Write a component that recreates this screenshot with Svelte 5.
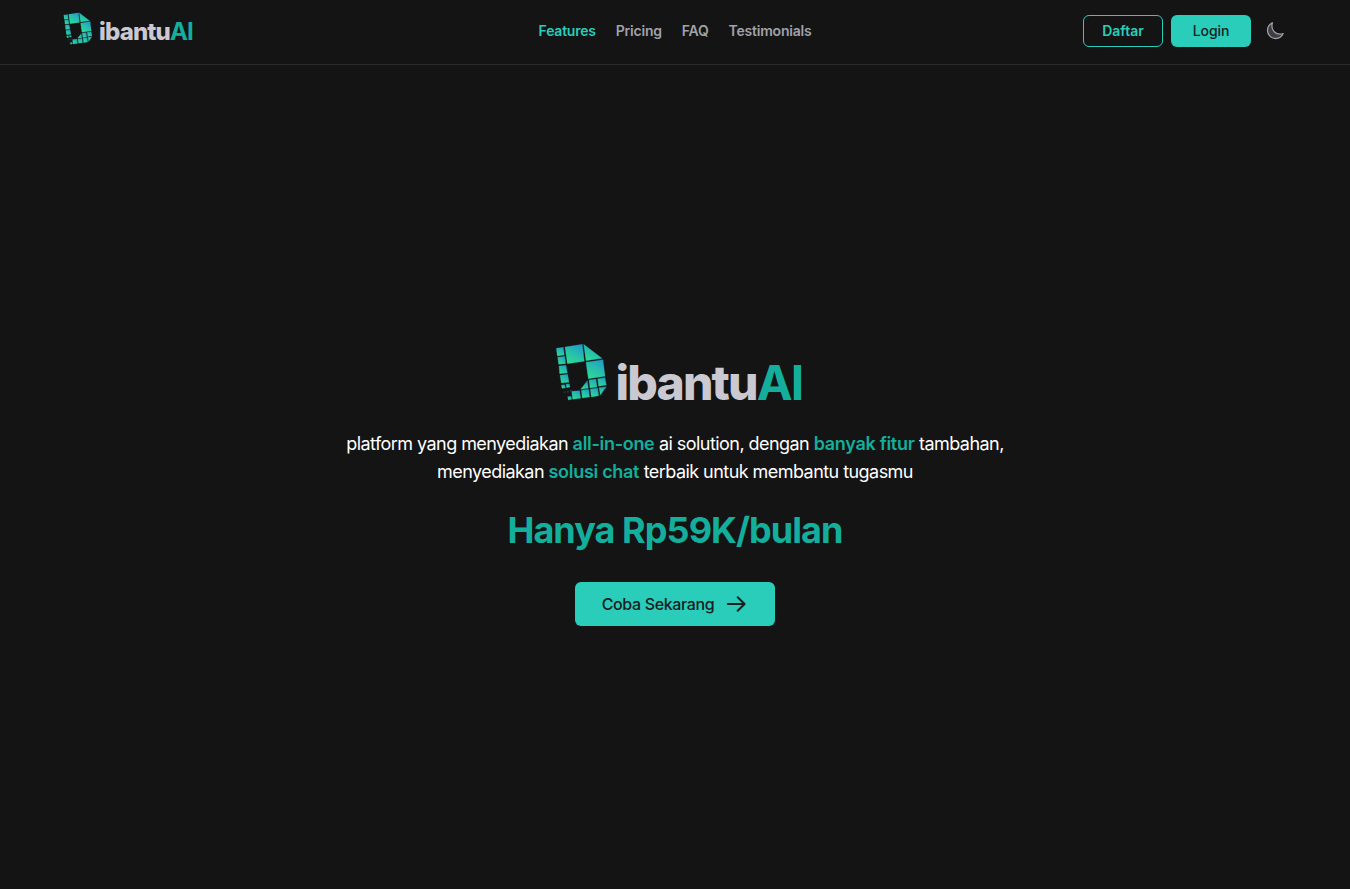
<script>
  const links = ['Features', 'Pricing', 'FAQ', 'Testimonials'];

  // Corner points of the tiles that make up the brand mark.
  const tiles = [
    '31,40 52,37 55,60 34,63',
    '57,36 109,28 115,79 64,86',
    '113,28 168,70 120,77',
    '35,67 56,64 59,86 38,88',
    '39,93 60,91 64,114 41,116',
    '42,121 65,118 69,142 46,144',
    '46,150 56,149 58,159 48,160',
    '60,148 70,147 72,156 62,158',
    '120,82 171,74 177,124 127,131',
    '124,137 127,160 104,163',
    '129,135 150,132 153,156 132,159',
    '155,131 177,128 181,150 158,154',
    '65,185 75,184 77,193 67,195',
    '77,169 101,167 104,190 80,193',
    '106,166 128,163 131,186 109,189',
    '133,162 155,159 158,182 136,186',
    '159,158 181,155 163,180'
  ];
</script>

{#snippet brand(id)}
  <span class="brand {id}">
    <svg class="mark" viewBox="27 24 159 174" aria-hidden="true">
      <defs>
        <linearGradient id="{id}-tile" x1="0.85" y1="0" x2="0.3" y2="1">
          <stop offset="0" stop-color="#2099cb" />
          <stop offset="0.5" stop-color="#27bdae" />
          <stop offset="1" stop-color="#2cda93" />
        </linearGradient>
      </defs>
      {#each tiles as points}
        <polygon {points} fill="url(#{id}-tile)" stroke="url(#{id}-tile)" stroke-width="0.8" />
      {/each}
      <g fill="#303232">
        <rect x="54" y="169" width="5" height="5" />
        <rect x="63" y="167" width="5" height="6" />
        <rect x="72" y="165" width="6" height="6" />
      </g>
    </svg>
    <span class="name">ibantu<b>AI</b></span>
  </span>
{/snippet}

<div class="page">
  <header>
    <div class="left">{@render brand('small')}</div>
    <nav>
      {#each links as link, i}
        <a href="#{link.toLowerCase()}" class:active={i === 0}>{link}</a>
      {/each}
    </nav>
    <div class="actions">
      <button class="outline">Daftar</button>
      <button class="solid">Login</button>
      <button class="theme" aria-label="Theme">
        <svg viewBox="0 0 24 24" width="20" height="20">
          <path d="M21.75 15A9.72 9.72 0 0 1 18 15.75C12.62 15.75 8.25 11.38 8.25 6c0-1.33.27-2.6.75-3.75A9.75 9.75 0 0 0 3 11.25C3 16.63 7.37 21 12.75 21a9.75 9.75 0 0 0 9-6Z" fill="#3f3f43" stroke="#a1a1aa" stroke-width="1.5" stroke-linejoin="round" />
        </svg>
      </button>
    </div>
  </header>

  <main>
    {@render brand('large')}
    <p>
      platform yang menyediakan <strong>all-in-one</strong> ai solution, dengan <strong>banyak fitur</strong> tambahan,<br />
      menyediakan <strong>solusi chat</strong> terbaik untuk membantu tugasmu
    </p>
    <h1>Hanya Rp59K/bulan</h1>
    <button class="cta">
      <span>Coba Sekarang</span>
      <svg viewBox="0 0 24 24" width="24" height="24">
        <path d="M3.8 12H20.3M13.7 5.2 20.6 12l-6.9 6.8" fill="none" stroke="currentColor" stroke-width="2" stroke-linecap="round" stroke-linejoin="round" />
      </svg>
    </button>
  </main>
</div>

<style>
  :global(body) {
    background: #141414;
  }
  .page {
    height: 889px;
    display: flex;
    flex-direction: column;
    overflow: hidden;
    font-family: Inter, sans-serif;
    color: #fff;
    background: #141414;
  }
  header {
    box-sizing: border-box;
    height: 65px;
    flex: none;
    display: grid;
    grid-template-columns: 1fr auto 1fr;
    align-items: center;
    padding: 0 63px 3px;
    border-bottom: 1px solid #2b2b2f;
  }
  .brand {
    display: flex;
    align-items: flex-start;
  }
  .mark {
    flex: none;
    display: block;
  }
  .name {
    font-weight: 800;
    color: #cac8d0;
    white-space: nowrap;
  }
  .name b {
    font-weight: 700;
    color: #14ae9c;
  }
  .small {
    padding-bottom: 3px;
  }
  .small .mark {
    width: 30px;
    height: 33px;
    margin-top: -1px;
  }
  .small .name {
    margin: 5px 0 0 6px;
    font-size: 24px;
    line-height: 28px;
    letter-spacing: -0.85px;
  }
  .large {
    padding-left: 7px;
  }
  .large .mark {
    width: 53px;
    height: 58px;
  }
  .large .name {
    margin: 16px 0 0 8px;
    font-size: 48px;
    line-height: 48px;
    letter-spacing: -1.85px;
  }
  nav {
    display: flex;
    gap: 20px;
    font-size: 14px;
    line-height: 20px;
    font-weight: 600;
    letter-spacing: -0.22px;
  }
  nav a {
    color: #a1a1aa;
    text-decoration: none;
  }
  nav a.active {
    color: #29cdba;
  }
  .actions {
    display: flex;
    justify-content: flex-end;
    align-items: center;
    gap: 8px;
  }
  button {
    box-sizing: border-box;
    font-family: inherit;
    padding: 0;
    border: 0;
    border-radius: 6px;
    color: #18201f;
    background: #29cdba;
    font-weight: 500;
  }
  .outline,
  .solid {
    width: 80px;
    height: 32px;
    font-size: 14px;
  }
  .solid {
    letter-spacing: -0.1px;
  }
  .outline {
    color: #29cdba;
    background: transparent;
    border: 1px solid #29cdba;
    font-weight: 600;
  }
  .theme {
    width: 20px;
    height: 20px;
    margin: 0 2px 0 6px;
    background: none;
  }
  .theme svg,
  .cta svg {
    display: block;
  }
  main {
    display: flex;
    flex-direction: column;
    align-items: center;
    padding-top: 278px;
  }
  p {
    margin: 23px 0 0;
    font-size: 18px;
    line-height: 28px;
    text-align: center;
    white-space: nowrap;
    letter-spacing: -0.55px;
  }
  strong {
    font-weight: 600;
    letter-spacing: -0.3px;
    color: #14ae9c;
  }
  h1 {
    margin: 24px 0 0;
    font-size: 36px;
    line-height: 40px;
    font-weight: 700;
    letter-spacing: -0.94px;
    color: #14ae9c;
  }
  .cta {
    display: flex;
    align-items: center;
    justify-content: center;
    gap: 10px;
    width: 200px;
    height: 44px;
    margin-top: 32px;
    font-size: 16px;
    letter-spacing: -0.36px;
  }
</style>
